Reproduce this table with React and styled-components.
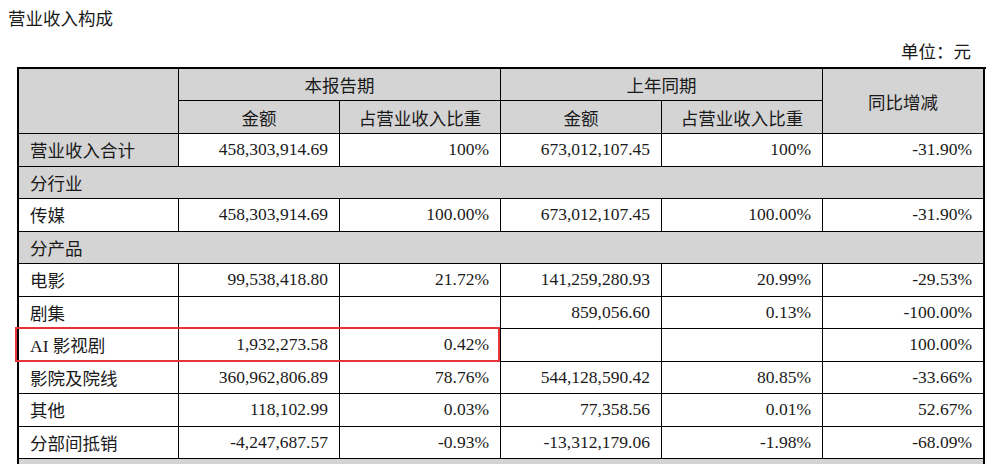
import styled, { createGlobalStyle } from "styled-components"

const GlobalStyle = createGlobalStyle`
  body {
    margin: 0;
    background: #fff;
    font-family: "Liberation Serif", "Noto Sans CJK SC", serif;
    color: #1a1a1a;
  }
`

const Page = styled.div`
  width: 987px;
  height: 464px;
  overflow: hidden;
`

const Title = styled.h3`
  margin: 0;
  padding: 6px 0 0 8px;
  height: 30px;
  font-size: 17.5px;
  font-weight: normal;
  line-height: 26px;
`

const Unit = styled.div`
  height: 31px;
  padding-right: 16px;
  text-align: right;
  font-size: 17.5px;
  line-height: 32px;
`

const Table = styled.div`
  margin-left: 17px;
  width: 967px;
  display: grid;
  grid-template-columns: 160px 161px 161px 161px 161px 162px;
  grid-template-rows: 32px 33px;
  grid-auto-rows: 32.5px;
  border-left: 2px solid #000;
  border-top: 2px solid #000;
  font-size: 17.5px;
`

const Cell = styled.div`
  position: relative;
  box-sizing: border-box;
  display: flex;
  align-items: center;
  justify-content: ${(p) =>
    p.$align === "right" ? "flex-end" : p.$align === "center" ? "center" : "flex-start"};
  padding: 0 11px 0 11px;
  border-right: ${(p) => (p.$last ? "2px" : "1px")} solid #000;
  border-bottom: 1px solid #000;
  background: ${(p) => (p.$gray ? "#d4d4d4" : "#fff")};
  grid-column: ${(p) => p.$col || "auto"};
  grid-row: ${(p) => p.$row || "auto"};
  white-space: nowrap;
`

const Highlight = styled.span`
  position: absolute;
  z-index: 2;
  left: -4px;
  top: -2px;
  width: 485px;
  height: 35px;
  box-sizing: border-box;
  border: 2px solid #e5343a;
  pointer-events: none;
`

const rows = [
  { name: "营业收入合计", gray: true, v: ["458,303,914.69", "100%", "673,012,107.45", "100%", "-31.90%"] },
  { section: "分行业" },
  { name: "传媒", v: ["458,303,914.69", "100.00%", "673,012,107.45", "100.00%", "-31.90%"] },
  { section: "分产品" },
  { name: "电影", v: ["99,538,418.80", "21.72%", "141,259,280.93", "20.99%", "-29.53%"] },
  { name: "剧集", v: ["", "", "859,056.60", "0.13%", "-100.00%"] },
  { name: "AI 影视剧", mark: true, v: ["1,932,273.58", "0.42%", "", "", "100.00%"] },
  { name: "影院及院线", v: ["360,962,806.89", "78.76%", "544,128,590.42", "80.85%", "-33.66%"] },
  { name: "其他", v: ["118,102.99", "0.03%", "77,358.56", "0.01%", "52.67%"] },
  { name: "分部间抵销", v: ["-4,247,687.57", "-0.93%", "-13,312,179.06", "-1.98%", "-68.09%"] },
  { section: " ", key: "next" },
]

function App() {
  return (
    <Page>
      <GlobalStyle />
      <Title>营业收入构成</Title>
      <Unit>单位：元</Unit>
      <Table>
        <Cell $gray $row="span 2" />
        <Cell $gray $col="span 2" $align="center">本报告期</Cell>
        <Cell $gray $col="span 2" $align="center">上年同期</Cell>
        <Cell $gray $last $row="span 2" $align="center">同比增减</Cell>
        <Cell $gray $align="center">金额</Cell>
        <Cell $gray $align="center">占营业收入比重</Cell>
        <Cell $gray $align="center">金额</Cell>
        <Cell $gray $align="center">占营业收入比重</Cell>

        {rows.map((r) =>
          r.section ? (
            <Cell key={r.key || r.section} $gray $last $col="span 6">{r.section}</Cell>
          ) : (
            [
              <Cell key={r.name} $gray={r.gray}>
                {r.name}
                {r.mark && <Highlight />}
              </Cell>,
              ...r.v.map((val, i) => (
                <Cell key={r.name + i} $align="right" $last={i === 4}>
                  {val}
                </Cell>
              )),
            ]
          )
        )}
      </Table>
    </Page>
  )
}

export default App
